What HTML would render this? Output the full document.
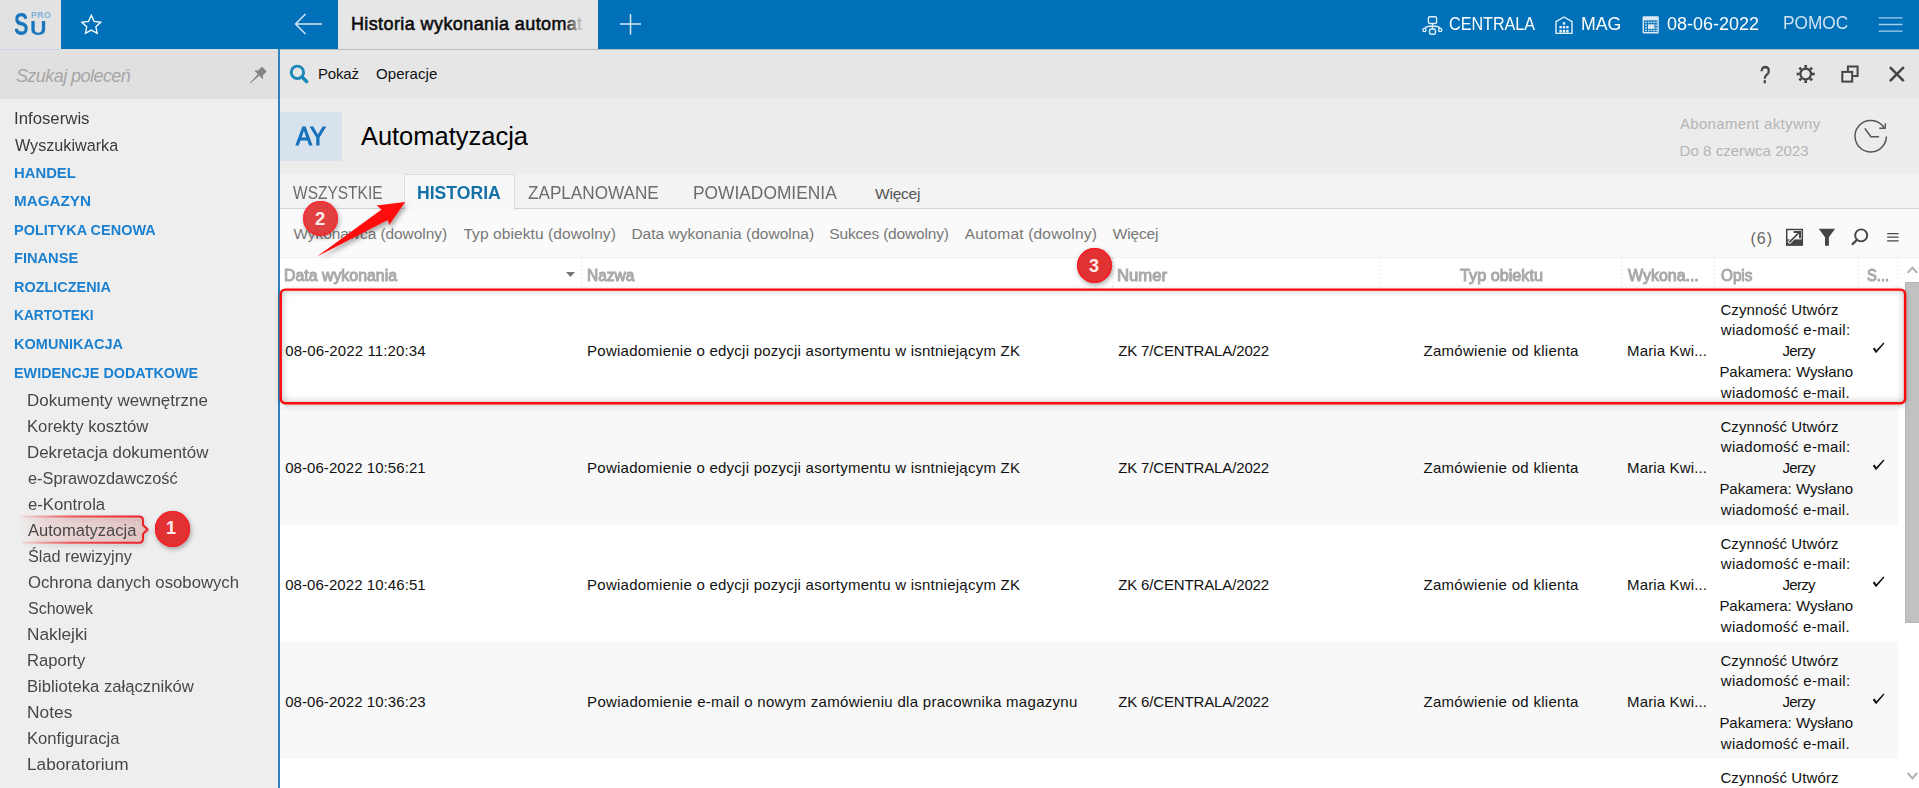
<!DOCTYPE html>
<html lang="pl">
<head>
<meta charset="utf-8">
<title>Automatyzacja - Historia wykonania automatyzacji</title>
<style>
html,body{margin:0;padding:0}
body{width:1919px;height:788px;overflow:hidden;position:relative;background:#ececec;font-family:"Liberation Sans",sans-serif}
.b{position:absolute}
.t{position:absolute;white-space:pre;line-height:1;display:block}
svg{position:absolute;overflow:visible}
.badge{width:35.6px;height:35.6px;border-radius:50%;background:#e03232;box-shadow:inset 0 0 0 1.8px #f5222a,1px 2px 5px rgba(0,0,0,.35)}
</style>
</head>
<body>
<!-- backgrounds -->
<div class="b" style="left:0;top:0;width:1919px;height:49px;background:#0070b8"></div>
<div class="b" style="left:0;top:0;width:61px;height:49px;background:#e2e2e2"></div>
<div class="b" style="left:338px;top:0;width:260px;height:49px;background:#e6e6e6"></div>
<div class="b" style="left:560px;top:0;width:38px;height:49px;z-index:2;background:linear-gradient(90deg,rgba(230,230,230,0) 12%,rgba(230,230,230,.38) 32%,rgba(230,230,230,.8) 52%,#e6e6e6 68%)"></div>

<div class="b" style="left:0;top:49px;width:278px;height:739px;background:#eeeeee"></div>
<div class="b" style="left:0;top:49px;width:278px;height:50px;background:#e0e0e0"></div>
<div class="b" style="left:0;top:49px;width:61px;height:1px;background:#c9d8e4"></div>
<div class="b" style="left:278px;top:49px;width:2px;height:739px;background:#2e82bd"></div>

<div class="b" style="left:280px;top:49px;width:1639px;height:49px;background:#e6e6e6"></div>
<div class="b" style="left:280px;top:49px;width:1639px;height:1px;background:#b9bdc0"></div>
<div class="b" style="left:280px;top:98px;width:1639px;height:76px;background:#ececec"></div>
<div class="b" style="left:280px;top:112px;width:62px;height:49px;background:#d8e2ec"></div>
<div class="b" style="left:280px;top:174px;width:1639px;height:34px;background:#f3f3f3"></div>
<div class="b" style="left:280px;top:208px;width:1639px;height:1px;background:#d2d2d2"></div>
<div class="b" style="left:280px;top:209px;width:1639px;height:49px;background:#fafafa"></div>
<div class="b" style="left:404px;top:174px;width:109px;height:35px;background:#f8f8f8;border:1px solid #dcdcdc;border-bottom:none"></div>
<div class="b" style="left:280px;top:257px;width:1639px;height:1px;background:#f0f0f0"></div>
<!-- table -->
<div class="b" style="left:280px;top:258px;width:1639px;height:530px;background:#fff"></div>
<div class="b" style="left:280px;top:408px;width:1618px;height:117px;background:#f8f8f8"></div>
<div class="b" style="left:280px;top:642px;width:1618px;height:117px;background:#f8f8f8"></div>
<!-- header col separators -->
<div class="b" style="left:581px;top:258px;width:1px;height:31px;background:repeating-linear-gradient(180deg,#d9d9d9 0,#d9d9d9 1.4px,transparent 1.4px,transparent 4px)"></div>
<div class="b" style="left:1112px;top:258px;width:1px;height:31px;background:repeating-linear-gradient(180deg,#d9d9d9 0,#d9d9d9 1.4px,transparent 1.4px,transparent 4px)"></div>
<div class="b" style="left:1380px;top:258px;width:1px;height:31px;background:repeating-linear-gradient(180deg,#d9d9d9 0,#d9d9d9 1.4px,transparent 1.4px,transparent 4px)"></div>
<div class="b" style="left:1621px;top:258px;width:1px;height:31px;background:repeating-linear-gradient(180deg,#d9d9d9 0,#d9d9d9 1.4px,transparent 1.4px,transparent 4px)"></div>
<div class="b" style="left:1714px;top:258px;width:1px;height:31px;background:repeating-linear-gradient(180deg,#d9d9d9 0,#d9d9d9 1.4px,transparent 1.4px,transparent 4px)"></div>
<div class="b" style="left:1858px;top:258px;width:1px;height:31px;background:repeating-linear-gradient(180deg,#d9d9d9 0,#d9d9d9 1.4px,transparent 1.4px,transparent 4px)"></div>
<div class="b" style="left:1897px;top:258px;width:1px;height:31px;background:repeating-linear-gradient(180deg,#d9d9d9 0,#d9d9d9 1.4px,transparent 1.4px,transparent 4px)"></div>
<!-- scrollbar -->
<div class="b" style="left:1905px;top:282px;width:14px;height:341px;background:#c1c1c1;box-shadow:inset 1px 1px 0 #b5b5b5, inset 0 -1px 0 #b5b5b5"></div>
<svg style="left:0;top:0" width="1919" height="788" viewBox="0 0 1919 788"><path d="M1907.7 272.9 L1912.4 267.5 L1917.1 272.9 M1907.7 773 L1912.4 778.4 L1917.1 773" fill="none" stroke="#b2b2b2" stroke-width="2.1"/></svg>
<!-- sort arrow -->
<svg style="left:566px;top:272px" width="9" height="5" viewBox="0 0 9 5"><path d="M0 0 H9 L4.5 5 Z" fill="#777"/></svg>

<!-- star -->
<svg style="left:0;top:0" width="1919" height="100" viewBox="0 0 1919 100">
<polygon points="91.30,15.40 94.12,21.42 100.72,22.24 95.87,26.78 97.12,33.31 91.30,30.10 85.48,33.31 86.73,26.78 81.88,22.24 88.48,21.42" fill="none" stroke="#fff" stroke-width="1.35" stroke-linejoin="miter"/>
<!-- back arrow -->
<path d="M322 24 H296 M305.5 14 L295.5 24 L305.5 34" fill="none" stroke="#d9e9f4" stroke-width="1.5"/>
<!-- plus -->
<path d="M620 24 H641 M630.5 14 V34.5" fill="none" stroke="#d9e9f4" stroke-width="1.5"/>
<!-- org icon -->
<g fill="none" stroke="#e6f0f8" stroke-width="1.4">
<rect x="1428.4" y="16.7" width="8.2" height="6.8" rx="1.6"/>
<path d="M1432.5 23.5 V28.8 M1432.5 26 Q1426 26 1425 28.4 M1432.5 26 Q1439 26 1440 28.4"/>
<circle cx="1424.4" cy="30" r="1.6"/>
<circle cx="1440.2" cy="30" r="1.6"/>
<rect x="1429.6" y="29" width="5.8" height="5.2" rx="1.5"/>
</g>
<!-- warehouse icon -->
<g fill="none" stroke="#e6f0f8" stroke-width="1.4">
<path d="M1556 33.4 V21.6 L1564 17 L1572 21.6 V33.4 Z" stroke-linejoin="round"/>
</g>
<g fill="#e6f0f8">
<rect x="1562.8" y="22.2" width="2.4" height="2.4"/>
<rect x="1559.4" y="26" width="2.4" height="2.4"/><rect x="1562.8" y="26" width="2.4" height="2.4"/><rect x="1566.2" y="26" width="2.4" height="2.4"/>
<rect x="1559.4" y="29.8" width="2.4" height="2.8"/><rect x="1562.8" y="29.8" width="2.4" height="2.8"/><rect x="1566.2" y="29.8" width="2.4" height="2.8"/>
</g>
<!-- calendar -->
<rect x="1642.6" y="16.2" width="16.2" height="17.2" rx="1" fill="#dbe9f4"/>
<rect x="1644" y="20.4" width="13.4" height="11.6" fill="#0070b8"/>
<g fill="#dbe9f4">
<rect x="1645.2" y="21.6" width="1.6" height="1.6"/><rect x="1647.9" y="21.6" width="1.6" height="1.6"/><rect x="1650.6" y="21.6" width="1.6" height="1.6"/><rect x="1653.3" y="21.6" width="1.6" height="1.6"/><rect x="1655.6" y="21.6" width="1.2" height="1.6"/>
<rect x="1645.2" y="24.3" width="1.6" height="1.6"/><rect x="1655.4" y="24.3" width="1.4" height="1.6"/>
<rect x="1645.2" y="27" width="1.6" height="1.6"/><rect x="1655.4" y="27" width="1.4" height="1.6"/>
<rect x="1645.2" y="29.7" width="1.6" height="1.6"/><rect x="1647.9" y="29.7" width="1.6" height="1.6"/><rect x="1650.6" y="29.7" width="1.6" height="1.6"/><rect x="1653.3" y="29.7" width="1.6" height="1.6"/><rect x="1655.6" y="29.7" width="1.2" height="1.6"/>
<rect x="1647.9" y="24.3" width="6.6" height="4.6"/>
</g>
<!-- hamburger -->
<path d="M1878.7 17.9 H1902.5 M1878.7 24.5 H1902.5 M1878.7 31.1 H1902.5" stroke="#a4cdea" stroke-width="1.3" fill="none"/>
<!-- pin -->
<g transform="translate(257.4 76) rotate(45) scale(1.15)" fill="#858585">
<rect x="-3" y="-8.6" width="6" height="6.4" rx="0.8"/>
<path d="M-5 -1.4 C-5 -3 -3.4 -3.4 -2.4 -3.4 H2.4 C3.4 -3.4 5 -3 5 -1.4 Z"/>
<path d="M-0.9 -1.6 H0.9 L0.35 9 H-0.35 Z"/>
</g>
<!-- toolbar magnifier -->
<circle cx="297.4" cy="72.3" r="6.2" fill="none" stroke="#1a88b8" stroke-width="2.9"/>
<path d="M302 76.9 L306.6 81.5" stroke="#1a88b8" stroke-width="3.5" stroke-linecap="round"/>
<!-- gear -->
<g transform="translate(1805.7 74)" stroke="#444" fill="none">
<circle r="5.3" stroke-width="2.2"/>
<g stroke-width="2.6">
<path d="M0 -6.2 V-9"/><path d="M0 -6.2 V-9" transform="rotate(45)"/><path d="M0 -6.2 V-9" transform="rotate(90)"/><path d="M0 -6.2 V-9" transform="rotate(135)"/>
<path d="M0 -6.2 V-9" transform="rotate(180)"/><path d="M0 -6.2 V-9" transform="rotate(225)"/><path d="M0 -6.2 V-9" transform="rotate(270)"/><path d="M0 -6.2 V-9" transform="rotate(315)"/>
</g></g>
<!-- restore -->
<path d="M1847.9 70.9 V66.5 H1857.6 V76.1 H1853.2" fill="none" stroke="#444" stroke-width="2"/>
<rect x="1842.3" y="71.9" width="9.9" height="9.7" fill="none" stroke="#444" stroke-width="2"/>
<!-- close -->
<path d="M1889.9 67.1 L1903.8 81.1 M1903.8 67.1 L1889.9 81.1" stroke="#444" stroke-width="2.5" fill="none"/>
</svg>
<svg style="left:0;top:100px" width="1919" height="160" viewBox="0 100 1919 160">
<!-- clock -->
<g fill="none" stroke="#555" stroke-width="1.5">
<path d="M1886.4 136.6 A15.7 15.7 0 1 1 1884.3 128.4"/>
<path d="M1879.3 128.2 H1885 L1885.5 123.2" stroke-linejoin="miter"/>
<path d="M1864.8 128.4 L1870.9 136.7 H1879.1" stroke-width="1.6"/>
</g>
<!-- export -->
<rect x="1786.7" y="229.5" width="15.6" height="15.6" fill="#fdfdfd" stroke="#444" stroke-width="1.5"/>
<rect x="1786.7" y="239.4" width="15.6" height="5.7" fill="#444"/>
<path d="M1788.6 243 L1794 237.6" stroke="#fdfdfd" stroke-width="3.4"/>
<path d="M1789.2 242.4 L1799.6 232" stroke="#444" stroke-width="1.7" fill="none"/>
<path d="M1793.6 231.9 H1800 V238.2" stroke="#444" stroke-width="2" fill="none"/>
<!-- filter -->
<path d="M1818.8 228.8 H1835 L1828.9 237.2 V245.8 H1825 V237.2 Z" fill="#444"/>
<!-- search -->
<circle cx="1861.2" cy="235.4" r="6" fill="none" stroke="#444" stroke-width="1.9"/>
<path d="M1856.8 240 L1852 244.6" stroke="#444" stroke-width="2.3"/>
<!-- menu -->
<path d="M1887.2 233.6 H1898.6 M1887.2 237.2 H1898.6 M1887.2 240.8 H1898.6" stroke="#444" stroke-width="1.2"/>
</svg>
<!-- checks -->
<svg style="left:0;top:0" width="1919" height="788" viewBox="0 0 1919 788">
<polygon points="1872.7,348.8 1874.6,347.6 1876.3,350.3 1883.4,342.6 1884.4,343.4 1876.0,353.3" fill="#111"/>
<polygon points="1872.7,465.8 1874.6,464.6 1876.3,467.3 1883.4,459.6 1884.4,460.4 1876.0,470.3" fill="#111"/>
<polygon points="1872.7,582.8 1874.6,581.6 1876.3,584.3 1883.4,576.6 1884.4,577.4 1876.0,587.3" fill="#111"/>
<polygon points="1872.7,699.8 1874.6,698.6 1876.3,701.3 1883.4,693.6 1884.4,694.4 1876.0,704.3" fill="#111"/>
</svg>

<!-- sidebar highlight -->
<svg style="left:0;top:505px;z-index:2" width="200" height="50" viewBox="0 505 200 50">
<defs>
<linearGradient id="hg" x1="0" x2="1" y1="0" y2="0"><stop offset="0" stop-color="#e02a2a" stop-opacity="0"/><stop offset="0.25" stop-color="#e02a2a" stop-opacity=".10"/><stop offset="1" stop-color="#c03030" stop-opacity=".17"/></linearGradient>
<linearGradient id="hs" x1="0" x2="1" y1="0" y2="0"><stop offset="0" stop-color="#f02020" stop-opacity=".05"/><stop offset="0.4" stop-color="#f02020" stop-opacity=".7"/><stop offset="1" stop-color="#ee1c24" stop-opacity="1"/></linearGradient>
<filter id="sh1" x="-20%" y="-40%" width="150%" height="200%"><feDropShadow dx="1" dy="2" stdDeviation="2" flood-color="#000" flood-opacity=".28"/></filter>
</defs>
<g filter="url(#sh1)">
<path d="M20 516.6 H139 Q143 516.6 143 520.6 V525 L147.6 529.5 L143 534 V538.4 Q143 542.8 139 542.8 H22 Z" fill="url(#hg)"/>
<path d="M20 516.6 H139 Q143 516.6 143 520.6 V525 L147.6 529.5 L143 534 V538.4 Q143 542.8 139 542.8 H22" fill="none" stroke="url(#hs)" stroke-width="2" stroke-linejoin="round"/>
</g>
</svg>
<!-- red box -->
<div class="b" style="left:280.6px;top:289.4px;width:1624.6px;height:114px;border-radius:5px;box-shadow:0 2px 6px rgba(0,0,0,.30), inset 0 0 9px rgba(0,0,0,.32);z-index:4"></div>
<svg style="left:0;top:280px;z-index:4" width="1919" height="140" viewBox="0 280 1919 140"><rect x="280.7" y="289.6" width="1624.4" height="113.6" rx="4.6" fill="none" stroke="#fd0a0a" stroke-width="2.4"/></svg>
<!-- arrow -->
<svg style="left:290px;top:180px;z-index:6" width="140" height="100" viewBox="290 180 140 100">
<defs><filter id="sh2" x="-20%" y="-20%" width="150%" height="160%"><feDropShadow dx="2" dy="3" stdDeviation="2.2" flood-color="#000" flood-opacity=".32"/></filter></defs>
<polygon points="317.1,256.4 381.6,209.5 376.6,205.4 405.2,201.9 389.2,225 387.8,220" fill="#ff0a0a" filter="url(#sh2)"/>
</svg>
<!-- badges -->
<div class="b badge" style="left:154.9px;top:511.0px;z-index:5;opacity:1"></div>
<div class="b badge" style="left:302.8px;top:200.6px;z-index:5;opacity:0.93"></div>
<div class="b badge" style="left:1076.5px;top:247.8px;z-index:5;opacity:1"></div>

<span class="t" style="left:14.20px;top:8.00px;font-size:32px;color:#1a76bd;letter-spacing:0.000px;font-weight:700;transform:scaleX(0.6810);transform-origin:0 0;">S</span>
<span class="t" style="left:29.91px;top:17.00px;font-size:21px;color:#1a76bd;letter-spacing:0.000px;font-weight:700;transform:scaleX(1.0923);transform-origin:0 0;">U</span>
<span class="t" style="left:31.00px;top:11.00px;font-size:8.6px;color:#7fb1da;letter-spacing:0.481px;font-weight:700;">PRO</span>
<span class="t" style="left:165.95px;top:519.00px;font-size:18px;color:#fdecec;letter-spacing:0.000px;font-weight:700;z-index:7">1</span>
<span class="t" style="left:314.90px;top:210.00px;font-size:18.5px;color:#fdecec;letter-spacing:0.000px;font-weight:700;z-index:7">2</span>
<span class="t" style="left:1088.90px;top:257.00px;font-size:18px;color:#fdecec;letter-spacing:0.000px;font-weight:700;z-index:7">3</span>
<span class="t" style="left:1759.80px;top:64.00px;font-size:23.5px;color:#444;letter-spacing:0.000px;transform:scaleX(0.7846);transform-origin:0 0;-webkit-text-stroke:0.6px #444">?</span>
<span class="t" style="left:350.90px;top:15.00px;font-size:18px;color:#0c0c0c;letter-spacing:0.412px;z-index:1;-webkit-text-stroke:0.55px #0c0c0c">Historia wykonania automat</span>
<span class="t" style="left:1448.60px;top:15.00px;font-size:18px;color:#fff;letter-spacing:0.000px;transform:scaleX(0.8957);transform-origin:0 0;">CENTRALA</span>
<span class="t" style="left:1580.62px;top:15.00px;font-size:18px;color:#fff;letter-spacing:0.000px;transform:scaleX(0.9846);transform-origin:0 0;">MAG</span>
<span class="t" style="left:1667.00px;top:15.00px;font-size:18px;color:#fff;letter-spacing:0.000px;transform:scaleX(0.9993);transform-origin:0 0;">08-06-2022</span>
<span class="t" style="left:1783.04px;top:14.00px;font-size:18px;color:#cfe3f1;letter-spacing:0.000px;transform:scaleX(0.9582);transform-origin:0 0;">POMOC</span>
<span class="t" style="left:318.00px;top:66.00px;font-size:15px;color:#111;letter-spacing:-0.172px;">Pokaż</span>
<span class="t" style="left:376.00px;top:66.00px;font-size:15px;color:#111;letter-spacing:0.068px;">Operacje</span>
<span class="t" style="left:15.90px;top:67.00px;font-size:18px;color:#a6a6a6;letter-spacing:-0.551px;font-style:italic;">Szukaj poleceń</span>
<span class="t" style="left:13.70px;top:111.00px;font-size:16.8px;color:#3a3a3a;letter-spacing:0.000px;transform:scaleX(0.9993);transform-origin:0 0;">Infoserwis</span>
<span class="t" style="left:14.70px;top:138.00px;font-size:16.8px;color:#3a3a3a;letter-spacing:0.000px;transform:scaleX(0.9634);transform-origin:0 0;">Wyszukiwarka</span>
<span class="t" style="left:13.84px;top:165.00px;font-size:15.5px;color:#1b80d0;letter-spacing:0.000px;font-weight:700;transform:scaleX(0.9570);transform-origin:0 0;">HANDEL</span>
<span class="t" style="left:13.82px;top:193.00px;font-size:15.5px;color:#1b80d0;letter-spacing:0.000px;font-weight:700;transform:scaleX(0.9824);transform-origin:0 0;">MAGAZYN</span>
<span class="t" style="left:13.87px;top:222.00px;font-size:15.5px;color:#1b80d0;letter-spacing:0.000px;font-weight:700;transform:scaleX(0.9330);transform-origin:0 0;">POLITYKA CENOWA</span>
<span class="t" style="left:13.86px;top:250.00px;font-size:15.5px;color:#1b80d0;letter-spacing:0.000px;font-weight:700;transform:scaleX(0.9431);transform-origin:0 0;">FINANSE</span>
<span class="t" style="left:13.87px;top:279.00px;font-size:15.5px;color:#1b80d0;letter-spacing:0.000px;font-weight:700;transform:scaleX(0.9311);transform-origin:0 0;">ROZLICZENIA</span>
<span class="t" style="left:13.92px;top:307.00px;font-size:15.5px;color:#1b80d0;letter-spacing:0.000px;font-weight:700;transform:scaleX(0.8838);transform-origin:0 0;">KARTOTEKI</span>
<span class="t" style="left:13.86px;top:336.00px;font-size:15.5px;color:#1b80d0;letter-spacing:0.000px;font-weight:700;transform:scaleX(0.9378);transform-origin:0 0;">KOMUNIKACJA</span>
<span class="t" style="left:13.87px;top:365.00px;font-size:15.5px;color:#1b80d0;letter-spacing:0.000px;font-weight:700;transform:scaleX(0.9270);transform-origin:0 0;">EWIDENCJE DODATKOWE</span>
<span class="t" style="left:26.69px;top:393.00px;font-size:16.8px;color:#474747;letter-spacing:0.000px;transform:scaleX(1.0104);transform-origin:0 0;z-index:3">Dokumenty wewnętrzne</span>
<span class="t" style="left:26.71px;top:419.00px;font-size:16.8px;color:#474747;letter-spacing:0.000px;transform:scaleX(0.9938);transform-origin:0 0;z-index:3">Korekty kosztów</span>
<span class="t" style="left:26.69px;top:445.00px;font-size:16.8px;color:#474747;letter-spacing:0.000px;transform:scaleX(1.0078);transform-origin:0 0;z-index:3">Dekretacja dokumentów</span>
<span class="t" style="left:27.70px;top:471.00px;font-size:16.8px;color:#474747;letter-spacing:0.000px;transform:scaleX(0.9726);transform-origin:0 0;z-index:3">e-Sprawozdawczość</span>
<span class="t" style="left:27.70px;top:497.00px;font-size:16.8px;color:#474747;letter-spacing:0.000px;transform:scaleX(0.9963);transform-origin:0 0;z-index:3">e-Kontrola</span>
<span class="t" style="left:27.70px;top:523.00px;font-size:16.8px;color:#474747;letter-spacing:0.000px;transform:scaleX(0.9844);transform-origin:0 0;z-index:3">Automatyzacja</span>
<span class="t" style="left:27.70px;top:549.00px;font-size:16.8px;color:#474747;letter-spacing:0.000px;transform:scaleX(0.9688);transform-origin:0 0;z-index:3">Ślad rewizyjny</span>
<span class="t" style="left:27.70px;top:575.00px;font-size:16.8px;color:#474747;letter-spacing:0.000px;transform:scaleX(0.9966);transform-origin:0 0;z-index:3">Ochrona danych osobowych</span>
<span class="t" style="left:27.70px;top:601.00px;font-size:16.8px;color:#474747;letter-spacing:0.000px;transform:scaleX(0.9534);transform-origin:0 0;z-index:3">Schowek</span>
<span class="t" style="left:26.67px;top:627.00px;font-size:16.8px;color:#474747;letter-spacing:0.000px;transform:scaleX(1.0277);transform-origin:0 0;z-index:3">Naklejki</span>
<span class="t" style="left:26.71px;top:653.00px;font-size:16.8px;color:#474747;letter-spacing:0.000px;transform:scaleX(0.9903);transform-origin:0 0;z-index:3">Raporty</span>
<span class="t" style="left:26.71px;top:679.00px;font-size:16.8px;color:#474747;letter-spacing:0.000px;transform:scaleX(0.9936);transform-origin:0 0;z-index:3">Biblioteka załączników</span>
<span class="t" style="left:26.67px;top:705.00px;font-size:16.8px;color:#474747;letter-spacing:0.000px;transform:scaleX(1.0342);transform-origin:0 0;z-index:3">Notes</span>
<span class="t" style="left:26.71px;top:731.00px;font-size:16.8px;color:#474747;letter-spacing:0.000px;transform:scaleX(0.9919);transform-origin:0 0;z-index:3">Konfiguracja</span>
<span class="t" style="left:26.67px;top:757.00px;font-size:16.8px;color:#474747;letter-spacing:0.000px;transform:scaleX(1.0269);transform-origin:0 0;z-index:3">Laboratorium</span>
<span class="t" style="left:295.80px;top:123.00px;font-size:26px;color:#1572bc;letter-spacing:0.000px;transform:scaleX(0.9132);transform-origin:0 0;-webkit-text-stroke:1.1px #1572bc">AY</span>
<span class="t" style="left:360.90px;top:124.00px;font-size:25.5px;color:#000;letter-spacing:-0.014px;">Automatyzacja</span>
<span class="t" style="left:1679.90px;top:116.00px;font-size:15px;color:#b4b4b4;letter-spacing:0.333px;">Abonament aktywny</span>
<span class="t" style="left:1679.60px;top:143.00px;font-size:15px;color:#b4b4b4;letter-spacing:0.040px;">Do 8 czerwca 2023</span>
<span class="t" style="left:293.40px;top:184.00px;font-size:18.5px;color:#6c6c6c;letter-spacing:0.000px;transform:scaleX(0.8380);transform-origin:0 0;">WSZYSTKIE</span>
<span class="t" style="left:417.22px;top:184.00px;font-size:18px;color:#1471a8;letter-spacing:0.000px;font-weight:700;transform:scaleX(0.9778);transform-origin:0 0;">HISTORIA</span>
<span class="t" style="left:527.90px;top:184.00px;font-size:18.5px;color:#6c6c6c;letter-spacing:0.000px;transform:scaleX(0.9259);transform-origin:0 0;">ZAPLANOWANE</span>
<span class="t" style="left:693.36px;top:184.00px;font-size:18.5px;color:#6c6c6c;letter-spacing:0.000px;transform:scaleX(0.9384);transform-origin:0 0;">POWIADOMIENIA</span>
<span class="t" style="left:875.00px;top:186.00px;font-size:15.5px;color:#555;letter-spacing:-0.213px;">Więcej</span>
<span class="t" style="left:293.40px;top:226.00px;font-size:15.5px;color:#787878;letter-spacing:-0.070px;">Wykonawca (dowolny)</span>
<span class="t" style="left:463.40px;top:226.00px;font-size:15.5px;color:#787878;letter-spacing:0.085px;">Typ obiektu (dowolny)</span>
<span class="t" style="left:631.40px;top:226.00px;font-size:15.5px;color:#787878;letter-spacing:0.005px;">Data wykonania (dowolna)</span>
<span class="t" style="left:829.30px;top:226.00px;font-size:15.5px;color:#787878;letter-spacing:-0.184px;">Sukces (dowolny)</span>
<span class="t" style="left:964.70px;top:226.00px;font-size:15.5px;color:#787878;letter-spacing:0.184px;">Automat (dowolny)</span>
<span class="t" style="left:1112.70px;top:226.00px;font-size:15.5px;color:#787878;letter-spacing:-0.153px;">Więcej</span>
<span class="t" style="left:1750.50px;top:231.00px;font-size:16px;color:#666;letter-spacing:1.037px;">(6)</span>
<span class="t" style="left:284.19px;top:268.00px;font-size:15.8px;color:#a9a9a9;letter-spacing:0.000px;transform:scaleX(1.0053);transform-origin:0 0;-webkit-text-stroke:1px #a9a9a9">Data wykonania</span>
<span class="t" style="left:587.12px;top:268.00px;font-size:15.8px;color:#a9a9a9;letter-spacing:0.000px;transform:scaleX(0.9832);transform-origin:0 0;-webkit-text-stroke:1px #a9a9a9">Nazwa</span>
<span class="t" style="left:1117.14px;top:268.00px;font-size:15.8px;color:#a9a9a9;letter-spacing:0.000px;transform:scaleX(1.0577);transform-origin:0 0;-webkit-text-stroke:1px #a9a9a9">Numer</span>
<span class="t" style="left:1459.50px;top:268.00px;font-size:15.8px;color:#a9a9a9;letter-spacing:0.000px;transform:scaleX(1.0275);transform-origin:0 0;-webkit-text-stroke:1px #a9a9a9">Typ obiektu</span>
<span class="t" style="left:1628.00px;top:268.00px;font-size:15.8px;color:#a9a9a9;letter-spacing:0.000px;transform:scaleX(1.0102);transform-origin:0 0;-webkit-text-stroke:1px #a9a9a9">Wykona...</span>
<span class="t" style="left:1720.50px;top:268.00px;font-size:15.8px;color:#a9a9a9;letter-spacing:0.000px;transform:scaleX(0.9668);transform-origin:0 0;-webkit-text-stroke:1px #a9a9a9">Opis</span>
<span class="t" style="left:1867.00px;top:268.00px;font-size:15.8px;color:#a9a9a9;letter-spacing:0.000px;transform:scaleX(0.9321);transform-origin:0 0;-webkit-text-stroke:1px #a9a9a9">S...</span>
<span class="t" style="left:285.20px;top:343.00px;font-size:15px;color:#111;letter-spacing:0.126px;">08-06-2022 11:20:34</span>
<span class="t" style="left:587.10px;top:343.00px;font-size:15px;color:#111;letter-spacing:0.244px;">Powiadomienie o edycji pozycji asortymentu w isntniejącym ZK</span>
<span class="t" style="left:1118.20px;top:343.00px;font-size:15px;color:#111;letter-spacing:-0.144px;">ZK 7/CENTRALA/2022</span>
<span class="t" style="left:1423.50px;top:343.00px;font-size:15px;color:#111;letter-spacing:0.285px;">Zamówienie od klienta</span>
<span class="t" style="left:1627.00px;top:343.00px;font-size:15px;color:#111;letter-spacing:0.147px;">Maria Kwi...</span>
<span class="t" style="left:285.20px;top:460.00px;font-size:15px;color:#111;letter-spacing:0.064px;">08-06-2022 10:56:21</span>
<span class="t" style="left:587.10px;top:460.00px;font-size:15px;color:#111;letter-spacing:0.244px;">Powiadomienie o edycji pozycji asortymentu w isntniejącym ZK</span>
<span class="t" style="left:1118.20px;top:460.00px;font-size:15px;color:#111;letter-spacing:-0.144px;">ZK 7/CENTRALA/2022</span>
<span class="t" style="left:1423.50px;top:460.00px;font-size:15px;color:#111;letter-spacing:0.285px;">Zamówienie od klienta</span>
<span class="t" style="left:1627.00px;top:460.00px;font-size:15px;color:#111;letter-spacing:0.147px;">Maria Kwi...</span>
<span class="t" style="left:285.20px;top:577.00px;font-size:15px;color:#111;letter-spacing:0.064px;">08-06-2022 10:46:51</span>
<span class="t" style="left:587.10px;top:577.00px;font-size:15px;color:#111;letter-spacing:0.244px;">Powiadomienie o edycji pozycji asortymentu w isntniejącym ZK</span>
<span class="t" style="left:1118.20px;top:577.00px;font-size:15px;color:#111;letter-spacing:-0.144px;">ZK 6/CENTRALA/2022</span>
<span class="t" style="left:1423.50px;top:577.00px;font-size:15px;color:#111;letter-spacing:0.285px;">Zamówienie od klienta</span>
<span class="t" style="left:1627.00px;top:577.00px;font-size:15px;color:#111;letter-spacing:0.147px;">Maria Kwi...</span>
<span class="t" style="left:285.20px;top:694.00px;font-size:15px;color:#111;letter-spacing:0.064px;">08-06-2022 10:36:23</span>
<span class="t" style="left:587.10px;top:694.00px;font-size:15px;color:#111;letter-spacing:0.296px;">Powiadomienie e-mail o nowym zamówieniu dla pracownika magazynu</span>
<span class="t" style="left:1118.20px;top:694.00px;font-size:15px;color:#111;letter-spacing:-0.144px;">ZK 6/CENTRALA/2022</span>
<span class="t" style="left:1423.50px;top:694.00px;font-size:15px;color:#111;letter-spacing:0.285px;">Zamówienie od klienta</span>
<span class="t" style="left:1627.00px;top:694.00px;font-size:15px;color:#111;letter-spacing:0.147px;">Maria Kwi...</span>
<span class="t" style="left:1720.40px;top:302.00px;font-size:15px;color:#111;letter-spacing:0.100px;">Czynność Utwórz</span>
<span class="t" style="left:1720.80px;top:322.00px;font-size:15px;color:#111;letter-spacing:0.323px;">wiadomość e-mail:</span>
<span class="t" style="left:1782.60px;top:343.00px;font-size:15px;color:#111;letter-spacing:-0.734px;">Jerzy</span>
<span class="t" style="left:1719.40px;top:364.00px;font-size:15px;color:#111;letter-spacing:-0.021px;">Pakamera: Wysłano</span>
<span class="t" style="left:1720.80px;top:385.00px;font-size:15px;color:#111;letter-spacing:0.291px;">wiadomość e-mail.</span>
<span class="t" style="left:1720.40px;top:419.00px;font-size:15px;color:#111;letter-spacing:0.100px;">Czynność Utwórz</span>
<span class="t" style="left:1720.80px;top:439.00px;font-size:15px;color:#111;letter-spacing:0.323px;">wiadomość e-mail:</span>
<span class="t" style="left:1782.60px;top:460.00px;font-size:15px;color:#111;letter-spacing:-0.734px;">Jerzy</span>
<span class="t" style="left:1719.40px;top:481.00px;font-size:15px;color:#111;letter-spacing:-0.021px;">Pakamera: Wysłano</span>
<span class="t" style="left:1720.80px;top:502.00px;font-size:15px;color:#111;letter-spacing:0.291px;">wiadomość e-mail.</span>
<span class="t" style="left:1720.40px;top:536.00px;font-size:15px;color:#111;letter-spacing:0.100px;">Czynność Utwórz</span>
<span class="t" style="left:1720.80px;top:556.00px;font-size:15px;color:#111;letter-spacing:0.323px;">wiadomość e-mail:</span>
<span class="t" style="left:1782.60px;top:577.00px;font-size:15px;color:#111;letter-spacing:-0.734px;">Jerzy</span>
<span class="t" style="left:1719.40px;top:598.00px;font-size:15px;color:#111;letter-spacing:-0.021px;">Pakamera: Wysłano</span>
<span class="t" style="left:1720.80px;top:619.00px;font-size:15px;color:#111;letter-spacing:0.291px;">wiadomość e-mail.</span>
<span class="t" style="left:1720.40px;top:653.00px;font-size:15px;color:#111;letter-spacing:0.100px;">Czynność Utwórz</span>
<span class="t" style="left:1720.80px;top:673.00px;font-size:15px;color:#111;letter-spacing:0.323px;">wiadomość e-mail:</span>
<span class="t" style="left:1782.60px;top:694.00px;font-size:15px;color:#111;letter-spacing:-0.734px;">Jerzy</span>
<span class="t" style="left:1719.40px;top:715.00px;font-size:15px;color:#111;letter-spacing:-0.021px;">Pakamera: Wysłano</span>
<span class="t" style="left:1720.80px;top:736.00px;font-size:15px;color:#111;letter-spacing:0.291px;">wiadomość e-mail.</span>
<span class="t" style="left:1720.40px;top:770.00px;font-size:15px;color:#111;letter-spacing:0.100px;">Czynność Utwórz</span>
</body>
</html>
